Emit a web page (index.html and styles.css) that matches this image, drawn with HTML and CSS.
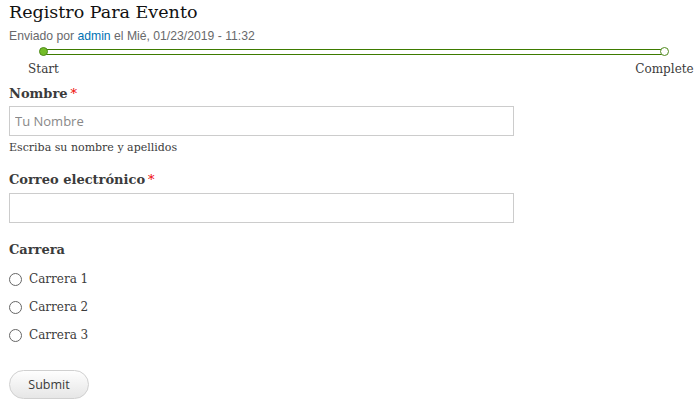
FILE: index.html
```html
<!DOCTYPE html>
<html lang="es">
<head>
<meta charset="utf-8">
<title>Registro Para Evento</title>
<link rel="stylesheet" href="styles.css">
</head>
<body>
<div class="page">
  <h1 class="title">Registro Para Evento</h1>
  <div class="meta">Enviado por <a href="#">admin</a> el Mié, 01/23/2019 - 11:32</div>
  <div class="progress">
    <div class="bar">
      <span class="dot dot-start current"><span class="dot-label">Start</span></span>
      <span class="dot dot-end"><span class="dot-label">Complete</span></span>
    </div>
  </div>
  <form class="form">
    <div class="field">
      <label class="label" for="nombre">Nombre<span class="req">*</span></label>
      <input class="text" id="nombre" type="text" placeholder="Tu Nombre">
      <div class="desc">Escriba su nombre y apellidos</div>
    </div>
    <div class="field field-email">
      <label class="label" for="correo">Correo electrónico<span class="req">*</span></label>
      <input class="text" id="correo" type="email">
    </div>
    <div class="field">
      <div class="label">Carrera</div>
      <div class="radios">
        <label class="radio"><input type="radio" name="carrera"><span>Carrera 1</span></label>
        <label class="radio"><input type="radio" name="carrera"><span>Carrera 2</span></label>
        <label class="radio"><input type="radio" name="carrera"><span>Carrera 3</span></label>
      </div>
    </div>
    <div class="actions">
      <button class="submit" type="button">Submit</button>
    </div>
  </form>
</div>
</body>
</html>
```
FILE: styles.css
```css
html, body {
  margin: 0;
  padding: 0;
  background: #fff;
}
body {
  font-family: "DejaVu Serif", Georgia, serif;
  color: #3b3b3b;
}
.page {
  padding: 0 9px;
}
.title {
  margin: 0;
  padding-top: 0;
  font-family: "DejaVu Serif", serif;
  font-weight: normal;
  font-size: 17.5px;
  line-height: 24px;
  color: #111;
}
.meta {
  margin-top: 4px;
  font-family: "Liberation Sans", Arial, sans-serif;
  font-size: 12.2px;
  line-height: 16px;
  color: #68696b;
}
.meta a {
  color: #0071b3;
  text-decoration: none;
}
.progress {
  padding: 5px 24px 0 34px;
  height: 36px;
}
.bar {
  position: relative;
  height: 4px;
  border: 1px solid #3e7b00;
  background: #fff;
}
.dot {
  position: absolute;
  top: -3px;
  width: 7px;
  height: 7px;
  border: 1px solid #4f8a1c;
  border-radius: 50%;
  background: #fff;
}
.dot.current {
  background: #74bd28;
}
.dot-start {
  left: -5px;
}
.dot-end {
  right: -5px;
}
.dot-label {
  position: absolute;
  top: 14px;
  left: 50%;
  transform: translateX(-50%);
  font-family: "DejaVu Serif", serif;
  font-size: 12px;
  line-height: 14px;
  color: #3b3b3b;
  white-space: nowrap;
}
.form {
  margin: 0;
}
.field {
  margin-bottom: 15px;
}
.field-email {
  margin-bottom: 18px;
}
.label {
  display: block;
  font-weight: bold;
  font-size: 13px;
  line-height: 18px;
  color: #3b3b3b;
  margin-bottom: 3px;
}
.field-email .label {
  margin-bottom: 4px;
}
.req {
  color: #e00;
  font-weight: normal;
  margin-left: 3px;
}
.text {
  display: block;
  box-sizing: border-box;
  width: 505px;
  height: 30px;
  margin: 0;
  padding: 4px 5px;
  border: 1px solid #ccc;
  border-radius: 0;
  font-family: "Open Sans", sans-serif;
  font-size: 13px;
  color: #333;
  outline: none;
}
.text::placeholder {
  color: #888;
}
.desc {
  margin-top: 4px;
  font-size: 11px;
  line-height: 16px;
  color: #3b3b3b;
}
.radios {
  display: flex;
  flex-direction: column;
  gap: 12px;
  padding-top: 9px;
}
.radio {
  display: flex;
  align-items: center;
  gap: 7px;
  font-size: 12px;
  line-height: 16px;
  color: #3b3b3b;
}
.radio input {
  appearance: none;
  -webkit-appearance: none;
  margin: 0;
  width: 13px;
  height: 13px;
  border: 1px solid #666;
  border-radius: 50%;
  background: #fff;
}
.actions {
  padding-top: 12px;
}
.submit {
  box-sizing: border-box;
  width: 80px;
  height: 29px;
  border: 1px solid #d0d0d0;
  border-radius: 15px;
  background: linear-gradient(#fefefe, #e6e6e6);
  font-family: "Open Sans", sans-serif;
  font-size: 12.5px;
  color: #3a3a3a;
  padding: 0;
}
```
